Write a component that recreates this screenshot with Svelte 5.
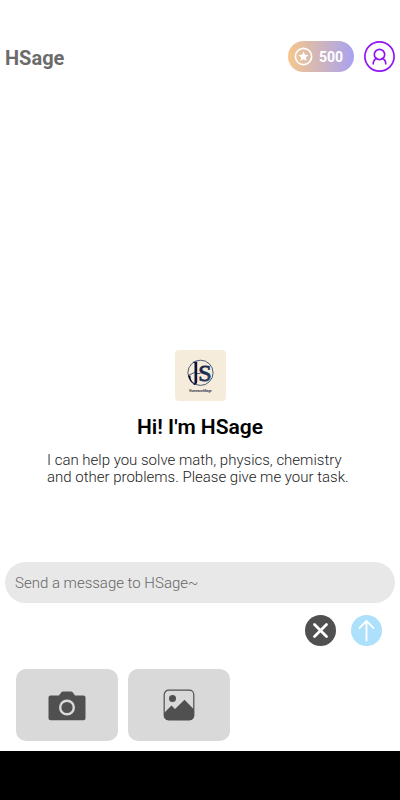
<script lang="ts">
    let message = '';
    const points = 500;

    function clearMessage() {
        message = '';
    }
</script>

<style>
    :global(body) {
        background: #fff;
    }

    .screen {
        display: flex;
        flex-direction: column;
        min-height: 100vh;
        font-family: Roboto, 'Liberation Sans', sans-serif;
    }

    button {
        display: flex;
        align-items: center;
        justify-content: center;
        padding: 0;
        border: none;
        font-family: inherit;
        cursor: pointer;
    }

    .header {
        display: flex;
        align-items: center;
        gap: 10px;
        padding: 41px 5px 0;
    }

    .brand {
        flex: 1;
        margin: 0;
        padding-top: 3px;
        font-size: 20px;
        line-height: 24px;
        font-weight: 700;
        color: #6b6b6b;
    }

    .points {
        gap: 6px;
        height: 31px;
        padding: 0 11px 0 6px;
        border-radius: 16px;
        background: linear-gradient(90deg, #f5c78c, #a8a2f0);
        color: #fff;
        font-size: 14px;
        font-weight: 700;
    }

    .profile {
        width: 31px;
        height: 31px;
        border-radius: 50%;
        background: none;
    }

    .welcome {
        flex: 1;
        display: flex;
        flex-direction: column;
        align-items: center;
        justify-content: flex-end;
        padding: 0 40px 76px;
    }

    .logo {
        display: block;
        width: 51px;
        height: 51px;
    }

    .welcome h2 {
        margin: 14px 0 13px;
        font-size: 21px;
        line-height: 24px;
        font-weight: 600;
        color: #000;
    }

    .welcome p {
        max-width: 306px;
        margin: 0;
        font-size: 15px;
        line-height: 17px;
        font-weight: 300;
        color: #222;
    }

    .composer {
        padding: 0 5px;
    }

    .message {
        display: block;
        box-sizing: border-box;
        width: 100%;
        height: 41px;
        padding: 0 10px;
        border: none;
        border-radius: 21px;
        outline: none;
        background: #e8e8e8;
        font-family: inherit;
        font-size: 15px;
        font-weight: 300;
        color: #333;
    }

    .message::placeholder {
        color: #666;
        opacity: 1;
    }

    .actions {
        display: flex;
        justify-content: flex-end;
        gap: 15px;
        padding: 12px 13px 0 0;
    }

    .round {
        width: 31px;
        height: 31px;
        border-radius: 50%;
    }

    .clear {
        background: #505050;
    }

    .send {
        background: #ace0fb;
    }

    .sources {
        display: flex;
        gap: 10px;
        padding: 23px 16px 10px;
    }

    .source {
        width: 102px;
        height: 72px;
        border-radius: 10px;
        background: #d9d9d9;
    }

    .system-bar {
        height: 49px;
        background: #000;
    }
</style>

<div class="screen">
    <header class="header">
        <h1 class="brand">HSage</h1>
        <button class="points">
            <svg width="19" height="19" viewBox="0 0 19 19" aria-hidden="true">
                <circle cx="9.5" cy="9.5" r="8.1" fill="none" stroke="#fff" stroke-width="1.7" />
                <path
                    d="M9.5 4.4l1.5 3.3 3.6.4-2.7 2.4.8 3.6-3.2-1.8-3.2 1.8.8-3.6-2.7-2.4 3.6-.4z"
                    fill="#fff"
                />
            </svg>
            <span>{points}</span>
        </button>
        <button class="profile" aria-label="Profile">
            <svg width="31" height="31" viewBox="0 0 31 31" fill="none" stroke="#9014f5">
                <circle cx="15.5" cy="15.5" r="14.6" stroke-width="1.7" />
                <circle cx="15.5" cy="13.5" r="5.2" stroke-width="1.7" />
                <path
                    d="M9.2 22.8c.2-3 1.5-4.7 3.7-5.5M21.8 22.8c-.2-3-1.5-4.7-3.7-5.5"
                    stroke-width="1.7"
                    stroke-linecap="round"
                />
            </svg>
        </button>
    </header>

    <main class="welcome">
        <svg class="logo" viewBox="0 0 51 51" role="img" aria-label="HomeworkSage">
            <defs>
                <linearGradient id="ink" x1="0" y1="0" x2="1" y2="1">
                    <stop offset="0" stop-color="#0b1238" />
                    <stop offset="1" stop-color="#29496f" />
                </linearGradient>
            </defs>
            <rect width="51" height="51" rx="4" fill="#f5ecdb" />
            <circle cx="25.5" cy="22.8" r="12.6" fill="none" stroke="#24375c" stroke-width=".8" />
            <path d="M17.5 11.8h4.7v20q0 3-3.700 3.200v-.6q1-.6 1-2.600V13z" fill="#0b1238" />
            <path d="M13.2 25.500c.6 4.500 3 7.500 6.800 9.300-3.200-3-4.500-5.500-4.600-9.300z" fill="#0b1238" />
            <path d="M13.2 25.500l6.600-3.200M22 23.500h3.500" fill="none" stroke="#24375c" stroke-width=".8" />
            <text
                x="30"
                y="31"
                text-anchor="middle"
                font-family="'Liberation Serif', serif"
                font-size="24"
                fill="url(#ink)"
                stroke="url(#ink)"
                stroke-width=".8">S</text
            >
            <text
                x="25.5"
                y="42"
                text-anchor="middle"
                font-family="'Liberation Sans', sans-serif"
                font-size="3"
                font-weight="700"
                fill="#1b2340">HomeworkSage</text
            >
        </svg>
        <h2>Hi! I'm HSage</h2>
        <p>I can help you solve math, physics, chemistry and other problems. Please give me your task.</p>
    </main>

    <section class="composer">
        <input
            class="message"
            type="text"
            aria-label="Message"
            placeholder="Send a message to HSage~"
            bind:value={message}
        />
        <div class="actions">
            <button class="round clear" aria-label="Clear" on:click={clearMessage}>
                <svg width="31" height="31" viewBox="0 0 31 31">
                    <path
                        d="M9.5 9.5l12 12M21.5 9.5l-12 12"
                        stroke="#fff"
                        stroke-width="2.8"
                        stroke-linecap="round"
                    />
                </svg>
            </button>
            <button class="round send" aria-label="Send">
                <svg width="31" height="31" viewBox="0 0 31 31">
                    <path
                        d="M15.5 25.5V6M8.5 13l7-7 7 7"
                        fill="none"
                        stroke="#fff"
                        stroke-width="1.8"
                        stroke-linecap="round"
                        stroke-linejoin="round"
                    />
                </svg>
            </button>
        </div>
    </section>

    <section class="sources">
        <button class="source" aria-label="Take a photo">
            <svg width="38" height="32" viewBox="0 0 38 32">
                <path
                    d="M2.5 6.5H11l2.3-3.2q.7-.8 1.7-.8h8q1 0 1.7.8L27 6.5h8.5q2 0 2 2v20.8q0 2-2 2h-33q-2 0-2-2V8.5q0-2 2-2z"
                    fill="#505050"
                />
                <circle cx="19" cy="18.5" r="6.8" fill="#505050" stroke="#d9d9d9" stroke-width="2.4" />
            </svg>
        </button>
        <button class="source" aria-label="Choose a picture">
            <svg width="32" height="32" viewBox="0 0 32 32">
                <rect
                    x="1.2"
                    y="1.2"
                    width="29.6"
                    height="29.6"
                    rx="4.5"
                    fill="none"
                    stroke="#505050"
                    stroke-width="1.2"
                />
                <circle cx="9.5" cy="9.5" r="3.5" fill="#505050" />
                <path
                    d="M1 24l7.5-7.5L12 20l9.5-9.2L31 20.5V26q0 5-5 5H6q-5 0-5-5z"
                    fill="#505050"
                />
            </svg>
        </button>
    </section>

    <div class="system-bar"></div>
</div>
